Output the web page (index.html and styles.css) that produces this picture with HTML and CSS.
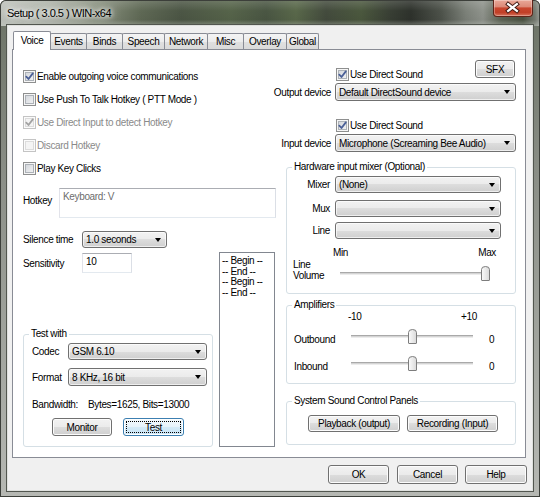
FILE: index.html
```html
<!DOCTYPE html>
<html>
<head>
<meta charset="utf-8">
<title>Setup</title>
<link rel="stylesheet" href="styles.css">
</head>
<body>
<div class="window">
  <div class="titlebar">
    <div class="title">Setup ( 3.0.5 ) WIN-x64</div>
    <div class="close">
      <svg width="40" height="17" viewBox="0 0 40 17"><path d="M15.5 5 L24.5 12 M24.5 5 L15.5 12" stroke="#3b1610" stroke-width="4.2" stroke-linecap="square"/><path d="M15.5 5 L24.5 12 M24.5 5 L15.5 12" stroke="#fff" stroke-width="2.3" stroke-linecap="square"/></svg>
    </div>
  </div>
  <div class="client">
    <div class="tabs">
      <div class="tab sel t-voice">Voice</div>
      <div class="tab t-events">Events</div>
      <div class="tab t-binds">Binds</div>
      <div class="tab t-speech">Speech</div>
      <div class="tab t-network">Network</div>
      <div class="tab t-misc">Misc</div>
      <div class="tab t-overlay">Overlay</div>
      <div class="tab t-global">Global</div>
    </div>
    <div class="panel">
      <div class="col-left">
        <div class="checks">
          <div class="check-row"><span class="cb"><svg class="ck" width="11" height="11" viewBox="0 0 11 11"><path d="M2.3 5.6 L4.5 8 L8.8 2.4" /></svg></span><span>Enable outgoing voice communications</span></div>
          <div class="check-row"><span class="cb"></span><span>Use Push To Talk Hotkey ( PTT Mode )</span></div>
          <div class="check-row dis"><span class="cb"><svg class="ck" width="11" height="11" viewBox="0 0 11 11"><path d="M2.3 5.6 L4.5 8 L8.8 2.4" /></svg></span><span>Use Direct Input to detect Hotkey</span></div>
          <div class="check-row dis"><span class="cb"></span><span>Discard Hotkey</span></div>
          <div class="check-row"><span class="cb"></span><span>Play Key Clicks</span></div>
        </div>
        <div class="hotkey-row">
          <span class="hk-label">Hotkey</span>
          <div class="field hk-field">Keyboard: V</div>
        </div>
        <div class="silence-row">
          <span class="lbl59">Silence time</span>
          <div class="combo w85"><span>1.0 seconds</span><i class="arrow"></i></div>
        </div>
        <div class="lower">
          <div class="lower-left">
            <div class="sens-row">
              <span class="lbl59">Sensitivity</span>
              <div class="field sens-field">10</div>
            </div>
            <fieldset class="group test-group">
              <legend>Test with</legend>
              <div class="test-body">
                <div class="trow codec-row"><span class="lbl36">Codec</span><div class="combo w139"><span>GSM 6.10</span><i class="arrow"></i></div></div>
                <div class="trow format-row"><span class="lbl36">Format</span><div class="combo w139"><span>8 KHz, 16 bit</span><i class="arrow"></i></div></div>
                <div class="bw"><span class="bw-label">Bandwidth:</span><span>Bytes=1625, Bits=13000</span></div>
                <div class="test-btns">
                  <button class="btn monitor">Monitor</button>
                  <button class="btn focused testb"><span class="focus-ring">Test</span></button>
                </div>
              </div>
            </fieldset>
          </div>
          <div class="listbox">
            <div>-- Begin --</div>
            <div>-- End --</div>
            <div>-- Begin --</div>
            <div>-- End --</div>
          </div>
        </div>
      </div>
      <div class="col-right">
        <div class="rtop">
          <div class="check-row r-check"><span class="cb"><svg class="ck" width="11" height="11" viewBox="0 0 11 11"><path d="M2.3 5.6 L4.5 8 L8.8 2.4" /></svg></span><span>Use Direct Sound</span></div>
          <button class="btn sfx">SFX</button>
        </div>
        <div class="dev-row">
          <span class="dev-label">Output device</span>
          <div class="combo w181"><span>Default DirectSound device</span><i class="arrow"></i></div>
        </div>
        <div class="check-row r-check2"><span class="cb"><svg class="ck" width="11" height="11" viewBox="0 0 11 11"><path d="M2.3 5.6 L4.5 8 L8.8 2.4" /></svg></span><span>Use Direct Sound</span></div>
        <div class="dev-row">
          <span class="dev-label">Input device</span>
          <div class="combo w181"><span>Microphone (Screaming Bee Audio)</span><i class="arrow"></i></div>
        </div>
        <fieldset class="group hw-group">
          <legend>Hardware input mixer (Optional)</legend>
          <div class="mrow mixer-row"><span class="mlabel">Mixer</span><div class="combo w166"><span>(None)</span><i class="arrow"></i></div></div>
          <div class="mrow mux-row"><span class="mlabel">Mux</span><div class="combo w166"><span></span><i class="arrow"></i></div></div>
          <div class="mrow line-row"><span class="mlabel">Line</span><div class="combo w166"><span></span><i class="arrow"></i></div></div>
          <div class="minmax"><span>Min</span><span>Max</span></div>
          <div class="lv-row">
            <div class="lv-label">Line<br>Volume</div>
            <div class="slider lv-slider">
              <div class="track"></div>
              <svg class="thumb" width="9" height="15" viewBox="0 0 9 15"><defs><linearGradient id="tg" x1="0" y1="0" x2="1" y2="0"><stop offset="0" stop-color="#fbfbfb"/><stop offset="1" stop-color="#d9d9d9"/></linearGradient></defs><path d="M0.5 14 V3.5 Q0.5 0.5 4.5 0.5 Q8.5 0.5 8.5 3.5 V14 Q8.5 14.5 8 14.5 H1 Q0.5 14.5 0.5 14 Z" fill="url(#tg)" stroke="#7d7d7d"/></svg>
            </div>
          </div>
        </fieldset>
        <fieldset class="group amp-group">
          <legend>Amplifiers</legend>
          <div class="scale"><span>-10</span><span>+10</span></div>
          <div class="arow outbound">
            <span class="alabel">Outbound</span>
            <div class="slider amp-slider">
              <div class="track"></div>
              <svg class="thumb" width="9" height="15" viewBox="0 0 9 15"><path d="M0.5 14 V3.5 Q0.5 0.5 4.5 0.5 Q8.5 0.5 8.5 3.5 V14 Q8.5 14.5 8 14.5 H1 Q0.5 14.5 0.5 14 Z" fill="url(#tg)" stroke="#7d7d7d"/></svg>
            </div>
            <span class="aval">0</span>
          </div>
          <div class="arow inbound">
            <span class="alabel">Inbound</span>
            <div class="slider amp-slider">
              <div class="track"></div>
              <svg class="thumb" width="9" height="15" viewBox="0 0 9 15"><path d="M0.5 14 V3.5 Q0.5 0.5 4.5 0.5 Q8.5 0.5 8.5 3.5 V14 Q8.5 14.5 8 14.5 H1 Q0.5 14.5 0.5 14 Z" fill="url(#tg)" stroke="#7d7d7d"/></svg>
            </div>
            <span class="aval">0</span>
          </div>
        </fieldset>
        <fieldset class="group sys-group">
          <legend>System Sound Control Panels</legend>
          <div class="sys-btns">
            <button class="btn playback">Playback (output)</button>
            <button class="btn recording">Recording (Input)</button>
          </div>
        </fieldset>
      </div>
    </div>
    <div class="footer">
      <button class="btn fbtn ok">OK</button>
      <button class="btn fbtn cancel">Cancel</button>
      <button class="btn fbtn help">Help</button>
    </div>
  </div>
</div>
</body>
</html>
```

FILE: styles.css
```css
html, body {
  margin: 0;
  padding: 0;
  background: #ffffff;
}
body {
  font-family: "Liberation Sans", Arial, sans-serif;
  font-size: 10px;
  letter-spacing: -0.35px;
  color: #000;
}
.window {
  width: 540px;
  height: 497px;
  box-sizing: border-box;
  display: flex;
  flex-direction: column;
  border-radius: 6px 6px 0 0;
  overflow: hidden;
  background: linear-gradient(to bottom, #6a7164 0%, #8a8e86 35%, #a8aba5 80%, #b6b8b3 100%);
  box-shadow: inset 0 0 0 1px #3c3f3a;
}
.titlebar {
  height: 25px;
  margin: 1px 1px 0 1px;
  display: flex;
  align-items: flex-start;
  border-radius: 5px 5px 0 0;
  background:
    linear-gradient(to bottom, rgba(255,255,255,0.14) 0%, rgba(255,255,255,0) 40%, rgba(0,0,0,0.04) 75%, rgba(190,195,188,0.45) 100%),
    linear-gradient(to right, #bfc3bc 0px, #adb2a8 50px, #858d7b 100px, #5f6955 140px, #4c5645 180px, #56644a 230px, #4a5643 265px, #59684a 295px, #434b3d 325px, #4b583e 360px, #383e34 390px, #2e322c 410px, #4d524a 440px, #7c8179 465px, #8f938c 482px, #5d6455 500px, #4a5241 522px, #777c72 534px, #a5a8a2 540px);
}
.title {
  padding-left: 6px;
  line-height: 24px;
  font-size: 11px;
  letter-spacing: -0.5px;
  color: #000;
  text-shadow: 0 0 4px #fff, 0 0 7px rgba(255,255,255,0.9), 0 0 11px rgba(255,255,255,0.7);
}
.close {
  margin-left: auto;
  margin-right: 6px;
  margin-top: -1px;
  width: 40px;
  height: 17px;
  box-sizing: border-box;
  border: 1px solid #5e2419;
  border-top: none;
  border-radius: 0 0 4px 4px;
  background: linear-gradient(to bottom, #e9a898 0%, #dc8a78 42%, #c8462e 50%, #c13f27 78%, #d6735c 100%);
  box-shadow: inset 0 0 0 1px rgba(255,255,255,0.3);
  display: flex;
  align-items: center;
  justify-content: center;
}
.close svg {
  display: block;
  margin-left: -1px;
  margin-top: -1px;
}
.client {
  flex: 1;
  margin: 0 8px 7px 8px;
  background: #f0f0f0;
  box-shadow: 0 0 0 1px #dfe1de, 0 0 0 2px #52564f;
  display: flex;
  flex-direction: column;
}
/* Tabs */
.tabs {
  display: flex;
  align-items: flex-end;
  height: 18px;
  margin: 5px 0 0 5px;
}
.tab {
  box-sizing: border-box;
  height: 16px;
  border: 1px solid #898c95;
  border-bottom: none;
  border-radius: 2px 2px 0 0;
  background: linear-gradient(to bottom, #f4f4f4 0%, #ececec 50%, #e0e0e0 50%, #dadada 100%);
  display: flex;
  align-items: center;
  justify-content: center;
  margin-left: -1px;
  flex: none;
}
.tab.sel {
  height: 19px;
  margin-bottom: -1px;
  margin-left: 0;
  padding-bottom: 2px;
  background: #fff;
  position: relative;
  z-index: 1;
}
.t-voice { width: 38px; }
.t-events { width: 37px; }
.t-binds { width: 37px; }
.t-speech { width: 43px; }
.t-network { width: 44px; }
.t-misc { width: 37px; }
.t-overlay { width: 44px; }
.t-global { width: 33px; }
/* Panel */
.panel {
  box-sizing: border-box;
  width: 514px;
  height: 409px;
  margin-left: 4px;
  border: 1px solid #898c95;
  background: #fff;
  display: flex;
}
.col-left {
  width: 273px;
  flex: none;
}
.col-right {
  flex: 1;
  display: flex;
  flex-direction: column;
}
/* checkboxes */
.checks {
  padding: 15px 0 0 10px;
}
.check-row {
  display: flex;
  align-items: center;
  height: 23px;
  white-space: nowrap;
}
.cb {
  box-sizing: border-box;
  width: 13px;
  height: 13px;
  margin-right: 1px;
  flex: none;
  border: 1px solid #8e8f8f;
  background: linear-gradient(135deg, #cdd1d7 0%, #f7f7f7 100%);
  box-shadow: inset 0 0 0 1px #f6f6f6, inset 0 0 0 2px #adb2b8;
  display: flex;
  align-items: center;
  justify-content: center;
}
.ck {
  display: block;
}
.ck path {
  fill: none;
  stroke: #4a5f97;
  stroke-width: 1.8;
  stroke-linecap: round;
  stroke-linejoin: round;
}
.check-row.dis {
  color: #8a8a8a;
}
.check-row.dis .cb {
  border-color: #c4c4c4;
  background: #f4f4f4;
  box-shadow: inset 0 0 0 1px #fbfbfb, inset 0 0 0 2px #dcdcdc;
}
.check-row.dis .ck path {
  stroke: #a3a3a3;
}
/* fields */
.field {
  box-sizing: border-box;
  background: #fff;
  border: 1px solid;
  border-color: #abadb3 #dbdfe6 #e3e9ef #e2e3ea;
  padding: 1px 3px;
  line-height: 12px;
  white-space: nowrap;
}
.hotkey-row {
  display: flex;
  align-items: flex-start;
  margin-top: 8px;
  padding-left: 10px;
}
.hk-label {
  width: 36px;
  flex: none;
  margin-top: 6px;
  line-height: 14px;
}
.hk-field {
  width: 217px;
  height: 30px;
  color: #6d6d6d;
  padding-top: 2px;
}
.silence-row {
  display: flex;
  align-items: center;
  margin-top: 13px;
  padding-left: 10px;
}
.lbl59 {
  width: 59px;
  flex: none;
}
.lbl36 {
  width: 36px;
  flex: none;
}
/* combo (dropdown list) */
.combo {
  box-sizing: border-box;
  height: 17px;
  border: 1px solid #707070;
  border-radius: 3px;
  background: linear-gradient(to bottom, #f2f2f2 0%, #ebebeb 50%, #dddddd 50%, #cfcfcf 100%);
  box-shadow: inset 0 0 0 1px rgba(255,255,255,0.65);
  display: flex;
  align-items: center;
  padding-left: 3px;
  white-space: nowrap;
  flex: none;
}
.combo .arrow {
  margin-left: auto;
  margin-right: 5px;
  width: 0;
  height: 0;
  border-left: 3px solid transparent;
  border-right: 3px solid transparent;
  border-top: 4px solid #000;
  flex: none;
}
.w85 { width: 85px; }
.w139 { width: 139px; }
.w166 { width: 166px; }
.w181 { width: 181px; height: 18px; }
.lower {
  display: flex;
  margin-top: 4px;
  padding-left: 10px;
}
.lower-left {
  width: 190px;
  flex: none;
}
.sens-row {
  display: flex;
  align-items: center;
  margin-top: 1px;
}
.sens-field {
  width: 50px;
  height: 20px;
  padding-top: 2px;
}
/* group boxes */
.group {
  margin: 0;
  padding: 0;
  border: 1px solid #d5dfe5;
  border-radius: 3px;
  min-width: 0;
  box-sizing: border-box;
}
.group legend {
  padding: 0 2px;
  margin-left: 5px;
  line-height: 12px;
}
.test-group {
  margin-top: 55px;
  height: 119px;
}
.test-body {
  padding-left: 8px;
}
.trow {
  display: flex;
  align-items: center;
}
.codec-row { margin-top: 3px; }
.format-row { margin-top: 8px; }
.format-row .combo { height: 18px; }
.bw {
  display: flex;
  margin-top: 13px;
  line-height: 12px;
  white-space: nowrap;
}
.bw-label {
  width: 56px;
  flex: none;
}
.test-btns {
  display: flex;
  margin-top: 7px;
  padding-left: 20px;
}
.btn {
  box-sizing: border-box;
  font: inherit;
  letter-spacing: inherit;
  color: #000;
  padding: 0;
  margin: 0;
  border: 1px solid #707070;
  border-radius: 3px;
  background: linear-gradient(to bottom, #f2f2f2 0%, #ebebeb 50%, #dddddd 50%, #cfcfcf 100%);
  box-shadow: inset 0 0 0 1px #fcfcfc;
  display: flex;
  align-items: center;
  justify-content: center;
  white-space: nowrap;
  flex: none;
}
.monitor {
  width: 60px;
  height: 18px;
}
.testb {
  width: 61px;
  height: 18px;
  margin-left: 11px;
  padding: 2px;
}
.btn.focused {
  border-color: #3c7fb1;
  background: linear-gradient(to bottom, #f3f9fd 0%, #e7f3fb 50%, #d5ebf8 50%, #c7e3f5 100%);
  box-shadow: inset 0 0 0 1px #ffffff;
}
.focus-ring {
  flex: 1;
  align-self: stretch;
  display: flex;
  align-items: center;
  justify-content: center;
  border: 1px dotted #000;
}
.listbox {
  box-sizing: border-box;
  width: 56px;
  height: 195px;
  margin-left: 6px;
  border: 1px solid #828790;
  padding: 3px 0 0 2px;
  line-height: 10.5px;
  white-space: nowrap;
  flex: none;
}
/* right column */
.rtop {
  display: flex;
  align-items: flex-start;
  padding-top: 10px;
}
.r-check {
  height: 13px;
  margin: 8px 0 0 50px;
}
.sfx {
  margin-left: auto;
  margin-right: 10px;
  width: 40px;
  height: 18px;
}
.dev-row {
  display: flex;
  align-items: center;
  margin-top: 2px;
}
.dev-label {
  width: 59px;
  margin-left: -14px;
  margin-right: 4px;
  text-align: right;
  white-space: nowrap;
  flex: none;
}
.r-check2 {
  height: 13px;
  margin: 18px 0 0 50px;
}
.hw-group {
  margin: 9px 9px 0 0;
  height: 133px;
}
.mrow {
  display: flex;
  align-items: center;
}
.mlabel {
  width: 43px;
  margin-right: 5px;
  text-align: right;
  flex: none;
}
.mixer-row { margin-top: 3px; }
.mux-row { margin-top: 7px; }
.line-row { margin-top: 5px; }
.minmax {
  display: flex;
  justify-content: space-between;
  margin-top: 8px;
  padding: 0 19px 0 46px;
  line-height: 12px;
}
.lv-row {
  display: flex;
  margin-top: -1px;
  height: 23px;
}
.lv-label {
  box-sizing: border-box;
  width: 53px;
  padding-left: 6px;
  line-height: 11px;
  margin-top: 0.5px;
  flex: none;
}
.slider {
  position: relative;
  flex: none;
}
.track {
  height: 1px;
  border-top: 1px solid #a9a9a9;
  border-bottom: 1px solid #ececec;
  background: #d4d4d4;
}
.thumb {
  position: absolute;
  top: 0;
  display: block;
}
.lv-slider {
  width: 152px;
  height: 23px;
}
.lv-slider .track {
  width: 149px;
  margin-top: 14px;
}
.lv-slider .thumb {
  top: 8px;
  left: 141px;
}
.amp-group {
  margin: 5px 9px 0 0;
  height: 85px;
}
.scale {
  display: flex;
  justify-content: space-between;
  padding: 0 38px 0 61px;
  line-height: 11px;
}
.arow {
  display: flex;
  align-items: flex-start;
}
.outbound { margin-top: 7px; }
.inbound { margin-top: 10px; }
.alabel {
  box-sizing: border-box;
  width: 64px;
  padding-left: 7px;
  margin-top: 5px;
  line-height: 12px;
  flex: none;
}
.amp-slider {
  width: 122px;
  height: 15px;
}
.amp-slider .track {
  margin-top: 6px;
}
.amp-slider .thumb {
  left: 57px;
}
.aval {
  margin-left: 16px;
  margin-top: 5px;
  line-height: 12px;
}
.sys-group {
  margin: 11px 9px 0 0;
  height: 50px;
}
.sys-btns {
  display: flex;
  margin-top: 8px;
  padding-left: 21px;
}
.playback {
  width: 92px;
  height: 17px;
}
.recording {
  width: 91px;
  height: 17px;
  margin-left: 7px;
}
/* footer */
.footer {
  display: flex;
  justify-content: flex-end;
  margin-top: 7px;
  padding-right: 5px;
}
.fbtn {
  width: 61px;
  height: 19px;
}
.cancel { margin-left: 8px; }
.help { margin-left: 7px; width: 62px; }
```
